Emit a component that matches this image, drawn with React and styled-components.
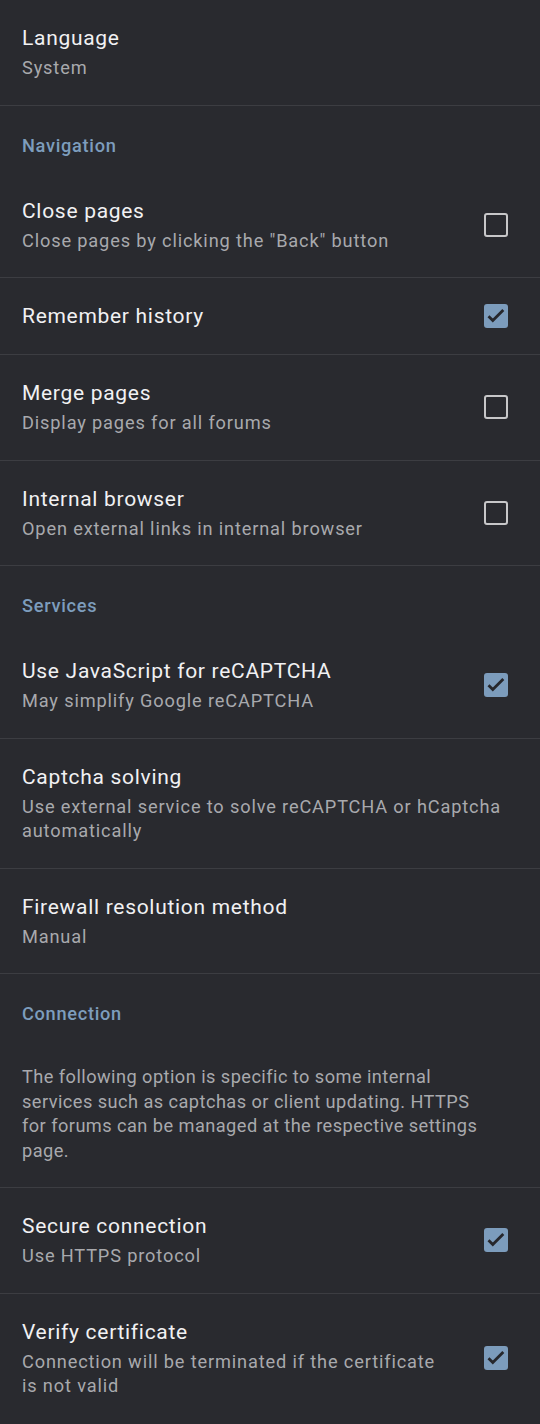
import React from "react";
import styled, { createGlobalStyle } from "styled-components";

const Global = createGlobalStyle`
  html, body { margin: 0; padding: 0; background: #292a2f; }
  body { font-family: Roboto, "Noto Sans", sans-serif; -webkit-font-smoothing: antialiased; }
`;

const Screen = styled.div`
  width: 540px;
  min-height: 1424px;
  background: #292a2f;
  display: flex;
  flex-direction: column;
`;

const Row = styled.div`
  display: flex;
  align-items: center;
  gap: 40px;
  padding: 24px ${(p) => (p.$plain ? "50px" : "32px")} 24px 22px;
  border-bottom: ${(p) => (p.$last ? "none" : "1px solid #3c3d42")};
`;

const Texts = styled.div`
  flex: 1;
  min-width: 0;
  display: flex;
  flex-direction: column;
  gap: 4px;
`;

const Title = styled.div`
  color: #f1f1f3;
  font-size: 21px;
  line-height: 28px;
  letter-spacing: 0.7px;
`;

const Summary = styled.div`
  color: #a8a9ad;
  font-size: 18.2px;
  line-height: 24.5px;
  letter-spacing: ${(p) => (p.$plain ? "0.45px" : "0.85px")};
`;

const Category = styled.div`
  color: #7d9dbd;
  font-size: 18.2px;
  font-weight: 500;
  line-height: 24px;
  letter-spacing: 0.7px;
  padding: 28px 22px 15px;
`;

const Box = styled.div`
  flex: none;
  width: 24px;
  height: 24px;
  box-sizing: border-box;
  border-radius: 3px;
  border: ${(p) => (p.$checked ? "none" : "2.5px solid #c7c7c9")};
  background: ${(p) => (p.$checked ? "#7c9cbc" : "transparent")};
  display: flex;
  align-items: center;
  justify-content: center;
`;

const Check = ({ checked }) => (
  <Box $checked={checked}>
    {checked && (
      <svg width="24" height="24" viewBox="0 0 24 24">
        <path d="M4.5 12.2l4.3 4.3L19.3 6" fill="none" stroke="#26272c" strokeWidth="2.8" />
      </svg>
    )}
  </Box>
);

const Pref = ({ title, summary, checked, last, plain }) => (
  <Row $last={last} $plain={plain}>
    <Texts>
      {title && <Title>{title}</Title>}
      {summary && <Summary $plain={plain}>{summary}</Summary>}
    </Texts>
    {checked !== undefined && <Check checked={checked} />}
  </Row>
);

export default function App() {
  return (
    <Screen>
      <Global />
      <Pref title="Language" summary="System" />
      <Category>Navigation</Category>
      <Pref title="Close pages" summary={'Close pages by clicking the "Back" button'} checked={false} />
      <Pref title="Remember history" checked={true} />
      <Pref title="Merge pages" summary="Display pages for all forums" checked={false} />
      <Pref title="Internal browser" summary="Open external links in internal browser" checked={false} />
      <Category>Services</Category>
      <Pref title="Use JavaScript for reCAPTCHA" summary="May simplify Google reCAPTCHA" checked={true} />
      <Pref title="Captcha solving" summary="Use external service to solve reCAPTCHA or hCaptcha automatically" />
      <Pref title="Firewall resolution method" summary="Manual" />
      <Category>Connection</Category>
      <Pref plain summary="The following option is specific to some internal services such as captchas or client updating. HTTPS for forums can be managed at the respective settings page." />
      <Pref title="Secure connection" summary="Use HTTPS protocol" checked={true} />
      <Pref title="Verify certificate" summary="Connection will be terminated if the certificate is not valid" checked={true} last />
    </Screen>
  );
}
